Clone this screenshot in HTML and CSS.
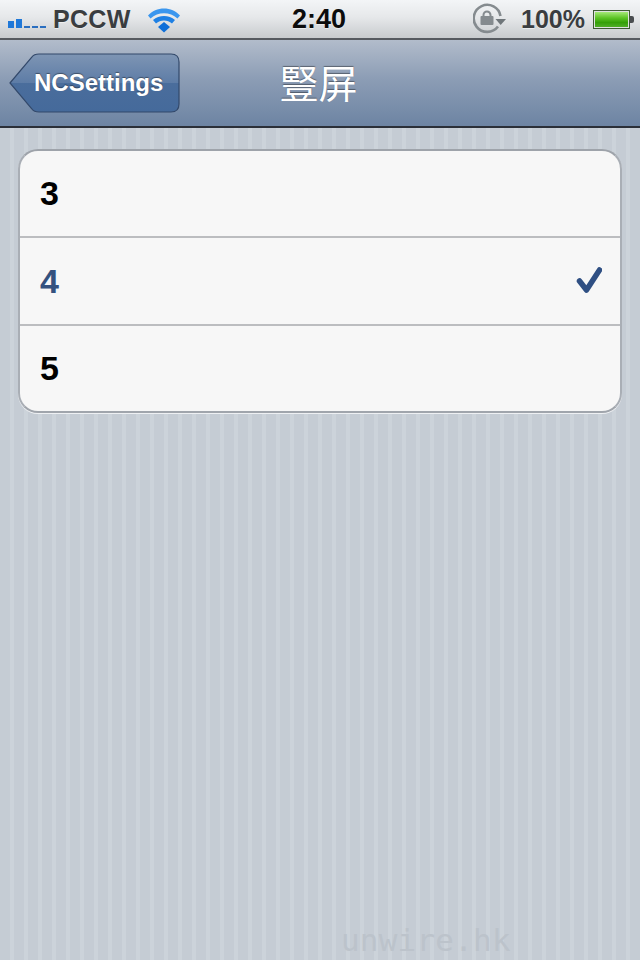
FILE: index.html

```html
<!DOCTYPE html>
<html lang="zh-Hant">
<head>
  <meta charset="UTF-8">
  <title>豎屏</title>
  <link rel="stylesheet" href="styles.css">
</head>
<body>

<div class="statusbar">
  <div class="status-left">
    <svg class="signal" width="40" height="12" viewBox="0 0 40 12">
      <rect x="0" y="5" width="6" height="7" fill="#1f78d8"/>
      <rect x="8" y="3" width="6" height="9" fill="#1f78d8"/>
      <rect x="16" y="10" width="6" height="2" fill="#2a6fc0"/>
      <rect x="24" y="10" width="6" height="2" fill="#2a6fc0"/>
      <rect x="32" y="10" width="6" height="2" fill="#2a6fc0"/>
    </svg>
    <span class="carrier">PCCW</span>
    <svg class="wifi" width="34" height="25" viewBox="0 0 34 25">
      <path d="M1 7.5 C9 -2 25 -2 33 7.5 L30.5 10.5 C23 3.5 11 3.5 3.5 10.5 Z" fill="#3a96ee"/>
      <path d="M6 12 C12 6.5 22 6.5 28 12 L25 15.5 C20.5 11.5 13.5 11.5 9 15.5 Z" fill="#1e80e4"/>
      <path d="M17 14 L23 19 L17 24.5 L11 19 Z" fill="#0f6fd8"/>
    </svg>
  </div>
  <div class="clock">2:40</div>
  <div class="status-right">
    <svg class="rotation" width="36" height="32" viewBox="0 0 36 32">
      <path d="M25 23.5 A13.5 13.5 0 1 1 27.5 13" fill="none" stroke="#858b8f" stroke-width="2.6"/>
      <path d="M22.5 16 L33 16 L27.7 22 Z" fill="#6f767a"/>
      <path d="M10.5 13 V12 a3.5 3.5 0 0 1 7 0 V13" fill="none" stroke="#858b8f" stroke-width="2"/>
      <rect x="7.5" y="13" width="13" height="9" rx="1" fill="#858b8f"/>
    </svg>
    <span class="battery-text">100%</span>
    <div class="battery">
      <div class="battery-fill"></div>
    </div>
    <div class="battery-tip"></div>
  </div>
</div>

<div class="navbar">
  <div class="back-wrap">
    <svg class="back-shape" width="172" height="60" viewBox="0 0 172 60">
      <defs>
        <linearGradient id="backGrad" x1="0" y1="0" x2="0" y2="1">
          <stop offset="0" stop-color="#7e95b4"/>
          <stop offset="0.5" stop-color="#5d7ca6"/>
          <stop offset="0.5" stop-color="#4a6d9c"/>
          <stop offset="1" stop-color="#456a9b"/>
        </linearGradient>
      </defs>
      <path d="M1 30 L23 4 Q25 1 30 1 H162 Q170 1 170 9 V51 Q170 59 162 59 H30 Q25 59 23 56 Z" fill="url(#backGrad)" stroke="#33496b" stroke-width="1.2"/>
    </svg>
    <span class="back-label">NCSettings</span>
  </div>
  <div class="nav-title">豎屏</div>
</div>

<div class="content">
  <div class="group">
    <div class="row">3</div>
    <div class="row selected">4
      <svg class="check" width="26" height="28" viewBox="0 0 26 28">
        <path d="M3.5 14 L10.5 23 L23.5 3" fill="none" stroke="#2f4f83" stroke-width="5.5" stroke-linecap="round" stroke-linejoin="round"/>
      </svg>
    </div>
    <div class="row">5</div>
  </div>
  <div class="watermark">unwire.hk</div>
</div>

</body>
</html>
```

FILE: styles.css

```css
html, body {
  margin: 0;
  padding: 0;
}
body {
  width: 640px;
  height: 960px;
  overflow: hidden;
  font-family: "Liberation Sans", Arial, sans-serif;
  display: flex;
  flex-direction: column;
}
.statusbar {
  height: 38px;
  flex: none;
  display: flex;
  align-items: center;
  justify-content: space-between;
  position: relative;
  background: linear-gradient(#f3f5f7, #e6e8ea 45%, #c8cbce);
  border-bottom: 2px solid #565a60;
  font-weight: bold;
  color: #3a3d40;
  text-shadow: 0 1px 0 rgba(255, 255, 255, 0.5);
}
.status-left {
  display: flex;
  align-items: center;
  padding-left: 8px;
}
.signal {
  margin-top: 6px;
}
.carrier {
  font-size: 25px;
  margin-left: 5px;
  letter-spacing: 0.3px;
}
.wifi {
  margin-left: 16px;
  margin-top: 3px;
}
.clock {
  position: absolute;
  left: 292px;
  top: 4px;
  font-size: 27px;
  color: #0c0c0c;
}
.status-right {
  display: flex;
  align-items: center;
  padding-right: 6px;
}
.rotation {
  margin-right: 12px;
}
.battery-text {
  font-size: 25px;
  margin-right: 8px;
}
.battery {
  box-sizing: border-box;
  width: 37px;
  height: 19px;
  border: 1px solid #3f5a34;
  background: #dfe2df;
  padding: 1px;
}
.battery-fill {
  height: 100%;
  background: linear-gradient(#a5e878, #5cc424 40%, #35a008 70%, #4fae26);
}
.battery-tip {
  width: 4px;
  height: 7px;
  background: #4a4d50;
  border-radius: 0 2px 2px 0;
}
.navbar {
  height: 86px;
  flex: none;
  position: relative;
  display: flex;
  align-items: center;
  justify-content: center;
  background: linear-gradient(#b2bccb, #8c9db5 45%, #6d84a3);
  border-bottom: 2px solid #2b2f38;
}
.back-wrap {
  position: absolute;
  left: 9px;
  top: 13px;
  width: 172px;
  height: 60px;
  display: flex;
  align-items: center;
}
.back-shape {
  position: absolute;
  left: 0;
  top: 0;
}
.back-label {
  position: relative;
  margin-left: 25px;
  font-size: 24px;
  font-weight: bold;
  color: #fff;
  text-shadow: 0 -1px 1px rgba(0, 0, 0, 0.4);
}
.nav-title {
  font-family: "Noto Sans CJK TC", "Liberation Sans", sans-serif;
  font-size: 39px;
  line-height: 44px;
  color: #fff;
  margin-right: 3px;
  margin-top: -4px;
  text-shadow: 0 -1px 1px rgba(0, 0, 0, 0.4);
}
.content {
  flex: 1;
  position: relative;
  padding: 21px 18px 0 18px;
  background: repeating-linear-gradient(90deg, #c5ccd4 0, #c5ccd4 10px, #ccd3da 10px, #ccd3da 14px);
}
.group {
  background: #f7f7f7;
  border: 2px solid #a9aeb5;
  border-top-color: #9ea3aa;
  border-bottom-color: #a0a5ac;
  border-radius: 20px;
  box-shadow: 0 1px 0 #eef0f3;
  overflow: hidden;
}
.row {
  box-sizing: border-box;
  height: 88px;
  display: flex;
  align-items: center;
  justify-content: space-between;
  padding: 0 18px 0 20px;
  font-size: 34px;
  font-weight: bold;
  color: #000;
  border-top: 2px solid #bcbdc0;
}
.row:first-child {
  border-top: none;
  height: 85px;
}
.row:last-child {
  height: 87px;
}
.row.selected {
  color: #34527f;
}
.watermark {
  position: absolute;
  left: 341px;
  bottom: 2px;
  font-family: "DejaVu Sans Mono", monospace;
  font-size: 31px;
  letter-spacing: 0.2px;
  color: #bcc3cb;
}
```
